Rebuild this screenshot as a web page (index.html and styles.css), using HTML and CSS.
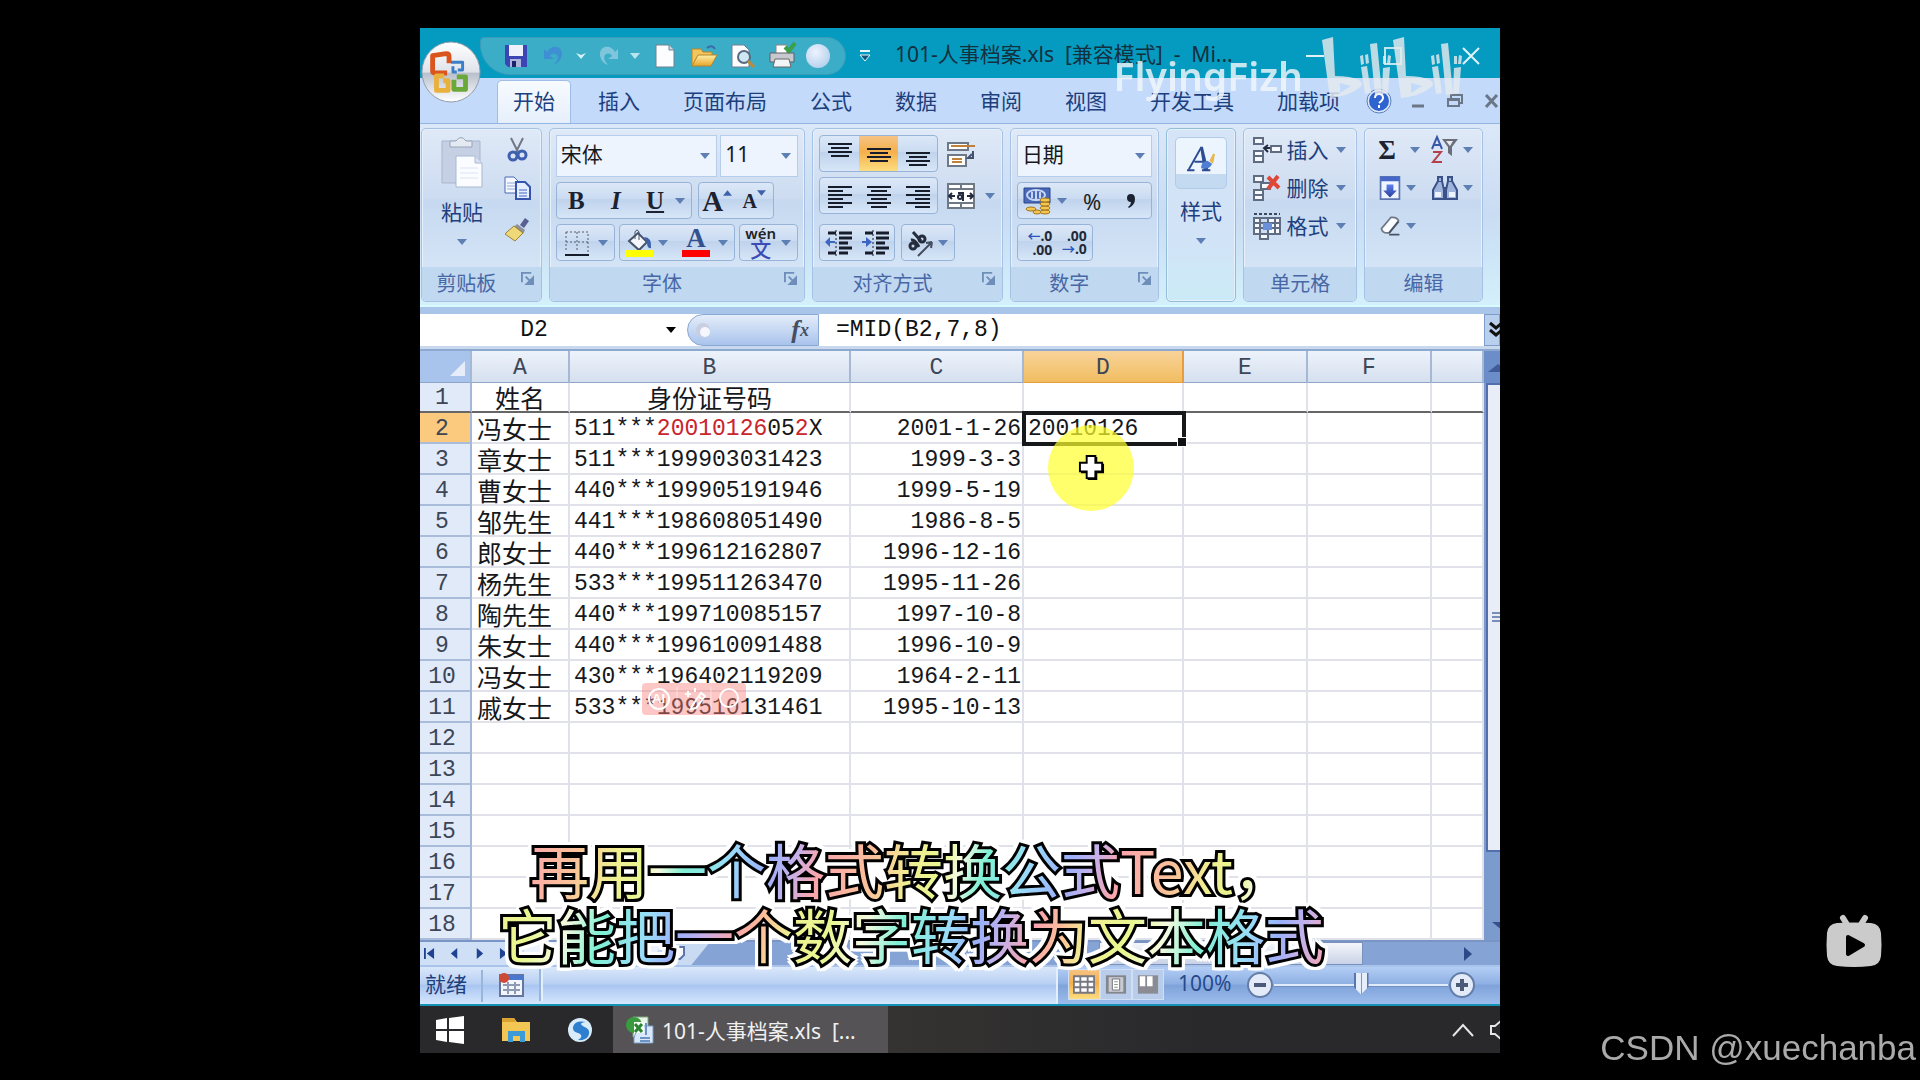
FILE: index.html
```html
<!DOCTYPE html>
<html lang="zh-CN">
<head>
<meta charset="utf-8">
<title>101-人事档案.xls [兼容模式]</title>
<link rel="stylesheet" href="styles.css">
</head>
<body>
<svg class="defs" aria-hidden="true">
  <defs>
    <linearGradient id="orb" x1="0" y1="0" x2="0" y2="1"><stop offset="0" stop-color="#fff"/><stop offset=".5" stop-color="#dfe3ea"/><stop offset=".52" stop-color="#b9c0cc"/><stop offset="1" stop-color="#fff"/></linearGradient>
    <radialGradient id="ball" cx=".4" cy=".35" r=".7"><stop offset="0" stop-color="#eef3ff"/><stop offset="1" stop-color="#b4d0ec"/></radialGradient>
    <linearGradient id="gold" x1="0" y1="0" x2="0" y2="1"><stop offset="0" stop-color="#fdf0a8"/><stop offset="1" stop-color="#e8a52a"/></linearGradient>
    <linearGradient id="blue" x1="0" y1="0" x2="0" y2="1"><stop offset="0" stop-color="#5d7ff0"/><stop offset="1" stop-color="#2a3f9a"/></linearGradient>
    <symbol id="down" viewBox="0 0 10 6"><path d="M0 0h10L5 6z" fill="#5d7fb4"/></symbol>
    <symbol id="launcher" viewBox="0 0 14 14"><path d="M1 11V1h10" fill="none" stroke="#6f8db9" stroke-width="2"/><path d="M13 6v7H6zM5 5l4 4" fill="#6f8db9" stroke="#6f8db9" stroke-width="2"/></symbol>
    <symbol id="top" viewBox="0 0 26 26"><path d="M1 3h24M4 7h18M1 11h24M4 15h18" stroke="#171c2a" stroke-width="2"/></symbol>
    <symbol id="lines-l" viewBox="0 0 26 26"><path d="M1 4h24M1 8h15M1 12h24M1 16h15M1 20h24M1 24h15" stroke="#171c2a" stroke-width="2"/></symbol>
    <symbol id="lines-c" viewBox="0 0 26 26"><path d="M1 4h24M5 8h16M1 12h24M5 16h16M1 20h24M5 24h16" stroke="#171c2a" stroke-width="2"/></symbol>
    <symbol id="lines-r" viewBox="0 0 26 26"><path d="M1 4h24M10 8h15M1 12h24M10 16h15M1 20h24M10 24h15" stroke="#171c2a" stroke-width="2"/></symbol>
  </defs>
</svg>

<main class="screen">
<section class="app">
  <header class="titlebar">
    <button class="orb" aria-label="Office">
      <svg viewBox="0 0 62 66"><ellipse cx="31" cy="33" rx="30" ry="31" fill="url(#orb)" stroke="#9099a8"/>
        <g fill="none" stroke-width="5" stroke-linejoin="round">
          <path d="M27 34H14q-2 0-2-2V16l14-2q3 0 3 3v7" stroke="#d9541e"/>
          <path d="M31 23h12v8h-5M33 27v6h4" stroke="#3b7fc8" stroke-width="3"/>
          <path d="M24 37h-8v15h12V42h-5" stroke="#e9b03c"/>
          <path d="M34 41v10h12V38h-9" stroke="#6ba83a"/>
        </g></svg>
    </button>
    <div class="qat">
      <button aria-label="保存"><svg class="i24" viewBox="0 0 24 24"><path d="M1 1h22v22H4l-3-3z" fill="#3b46b4"/><path d="M5 1h14v11H5z" fill="#eef1fb"/><path d="M6 15h11v8H6z" fill="#aab4dc"/><path d="M8 17h4v6H8z" fill="#1c2468"/></svg></button>
      <button aria-label="撤消"><svg class="i24" viewBox="0 0 24 24"><path d="M2 5v10h10l-4-3c3-5 10-2 7 5l-4 4c10-3 12-16 4-18-4-1-8 1-10 5z" fill="#3f8fd4"/></svg></button>
      <svg class="tiny" viewBox="0 0 10 6"><path d="M0 0l5 6 5-6-5 2z" fill="#d8f2fa"/></svg>
      <button aria-label="恢复"><svg class="i24" viewBox="0 0 24 24"><path d="M22 5v10H12l4-3c-3-5-10-2-7 5l3 4C3 18 1 5 9 3c4-1 8 1 10 5z" fill="#7fc5dc"/></svg></button>
      <svg class="tiny" viewBox="0 0 10 6"><path d="M0 0h10L5 6z" fill="#b8e4f0"/></svg>
      <button class="wide" aria-label="新建"><svg class="i24" viewBox="0 0 24 24"><path d="M3 1h13l5 5v17H3z" fill="#fcfdff" stroke="#70808f"/><path d="M16 1v5h5" fill="#cdd8e6" stroke="#70808f"/></svg></button>
      <button class="wide" aria-label="打开"><svg class="i28" viewBox="0 0 28 24"><path d="M2 22V5h9l2 3h9v4" fill="#f2c65a" stroke="#b5862c"/><path d="M2 22l6-11h19l-6 11z" fill="url(#gold)" stroke="#b5862c"/><path d="M17 4q5-4 8 1" fill="none" stroke="#3a6aa8" stroke-width="2"/></svg></button>
      <button class="wide" aria-label="打印预览"><svg class="i24" viewBox="0 0 24 24"><path d="M1 1h12l5 5v17H1z" fill="#fcfdff" stroke="#70808f"/><circle cx="13" cy="13" r="6" fill="#cfe6f5" stroke="#596b80" stroke-width="2"/><path d="M17 17l6 6" stroke="#c08a30" stroke-width="3"/></svg></button>
      <button class="wide" aria-label="打印"><svg class="i28" viewBox="0 0 28 26"><path d="M8 2h11v9H8z" fill="#fff" stroke="#888"/><path d="M2 10h24v9H2z" fill="#c8c9cf" stroke="#5d5f66"/><path d="M7 16h14l2 8H5z" fill="#f3f4f6" stroke="#666"/><path d="M17 4l4 4 6-8" fill="none" stroke="#3ba046" stroke-width="4"/></svg></button>
      <svg class="i24" viewBox="0 0 24 24"><circle cx="12" cy="12" r="12" fill="url(#ball)"/></svg>
    </div>
    <svg class="more" viewBox="0 0 10 12"><path d="M0 1h10" stroke="#e8f8fc" stroke-width="2"/><path d="M0 5h10l-5 6z" fill="#12557a" stroke="#e8f8fc"/></svg>
    <h1 class="doc-title">101-人事档案.xls&nbsp; [兼容模式]&nbsp; -&nbsp; Mi...</h1>
    <div class="win-buttons">
      <button aria-label="最小化"><svg viewBox="0 0 18 18"><path d="M0 9h18" stroke="#dff3f8" stroke-width="2"/></svg></button>
      <button aria-label="最大化"><svg viewBox="0 0 18 18"><path d="M1 1h16v16H1z" fill="none" stroke="#bfe5ef" stroke-width="2"/></svg></button>
      <button aria-label="关闭"><svg viewBox="0 0 18 18"><path d="M1 1l16 16M17 1L1 17" stroke="#dff3f8" stroke-width="2"/></svg></button>
    </div>
  </header>

  <nav class="tabs">
    <button class="tab active">开始</button><button class="tab">插入</button><button class="tab">页面布局</button><button class="tab">公式</button><button class="tab">数据</button><button class="tab">审阅</button><button class="tab">视图</button><button class="tab">开发工具</button><button class="tab">加载项</button>
    <div class="tab-tools">
      <button aria-label="帮助"><svg class="i24" viewBox="0 0 24 24"><circle cx="12" cy="12" r="11" fill="#2e63d0" stroke="#dce9fb" stroke-width="2"/><circle cx="12" cy="12" r="12" fill="none" stroke="#5d7fb8"/><path d="M8 9q0-4 4-4t4 4q0 2-4 5M12 16v3" fill="none" stroke="#fff" stroke-width="2"/></svg></button>
      <button aria-label="最小化窗口"><svg class="i16" viewBox="0 0 16 16"><path d="M2 13h12" stroke="#6b7686" stroke-width="3"/></svg></button>
      <button aria-label="还原窗口"><svg class="i16" viewBox="0 0 16 16"><path d="M4 5V2h11v8h-3" fill="none" stroke="#6b7686" stroke-width="2"/><path d="M1 6h11v7H1zM1 7h11" fill="none" stroke="#6b7686" stroke-width="2"/></svg></button>
      <button aria-label="关闭窗口"><svg class="i16" viewBox="0 0 16 16"><path d="M2 2l11 12M13 2L2 14" stroke="#6b7686" stroke-width="3"/></svg></button>
    </div>
  </nav>

  <div class="ribbon">
    <section class="group clip">
      <div class="group-body">
        <button class="big paste"><svg viewBox="0 0 44 52"><path d="M2 4h38v42H2z" fill="#c5d0e4" stroke="#a9b6cc"/><path d="M10 4h6q5-7 10 0h6v6H10z" fill="#e4e9f2" stroke="#98a4b8"/><path d="M16 19h19l7 7v24H16z" fill="#fbfcff" stroke="#a9b8d0"/><path d="M35 19v7h7" fill="#d8e2f2" stroke="#a9b8d0"/><path d="M20 31h18M20 36h18M20 41h18" stroke="#dbe4f3"/></svg><span>粘贴</span><svg class="tiny"><use href="#down"/></svg></button>
        <div class="clip-side">
          <button aria-label="剪切"><svg class="i24" viewBox="0 0 24 24"><path d="M6 1l7 14M18 1l-7 14" stroke="#6f7885" stroke-width="2"/><circle cx="8" cy="19" r="4" fill="none" stroke="#3d5fb0" stroke-width="3"/><circle cx="17" cy="18" r="4" fill="none" stroke="#3d5fb0" stroke-width="3"/></svg></button>
          <button aria-label="复制"><svg class="i28" viewBox="0 0 28 24"><path d="M2 1h9l4 4v12H2z" fill="#f5f9ff" stroke="#4b6ab5"/><path d="M4 7h8M4 10h8M4 13h8" stroke="#8fa8dc"/><path d="M13 6h9l5 5v12H13z" fill="#e4eeff" stroke="#3555ad" stroke-width="2"/><path d="M16 14h8M16 17h8M16 20h8" stroke="#4468c4"/></svg></button>
          <button aria-label="格式刷"><svg class="i28" viewBox="0 0 28 24"><path d="M17 8l5-7 4 3-5 7z" fill="#5a5f93"/><path d="M14 7l8 6-2 4-9-7z" fill="#8c8f9c"/><path d="M11 9l9 7-8 8L2 17l2-2z" fill="#efd878" stroke="#9c8230"/></svg></button>
        </div>
      </div>
      <h2>剪贴板<svg class="launch"><use href="#launcher"/></svg></h2>
    </section>

    <section class="group">
      <div class="group-body rows">
        <div class="row">
          <div class="combo grow"><select aria-label="字体"><option>宋体</option></select><svg class="tiny"><use href="#down"/></svg></div>
          <div class="combo size"><select aria-label="字号"><option>11</option></select><svg class="tiny"><use href="#down"/></svg></div>
        </div>
        <div class="row">
          <div class="set w136"><button class="serif b">B</button><button class="serif i">I</button><button class="serif u">U</button><svg class="tiny"><use href="#down"/></svg></div>
          <div class="set w76"><button class="serif big-a" aria-label="增大字号">A<svg class="mark" viewBox="0 0 10 6"><path d="M0 6h10L5 0z" fill="#3e62a8"/></svg></button><button class="serif small-a" aria-label="减小字号">A<svg class="mark" viewBox="0 0 10 6"><path d="M0 0h10L5 6z" fill="#3e62a8"/></svg></button></div>
        </div>
        <div class="row spread">
          <div class="set w59"><button aria-label="边框"><svg class="i26" viewBox="0 0 26 26"><path d="M2 2h22v20M2 2v20M13 2v20M2 12h22" fill="none" stroke="#525b6e" stroke-dasharray="2 2"/><path d="M1 25h24" stroke="#171c2a" stroke-width="2"/></svg></button><svg class="tiny"><use href="#down"/></svg></div>
          <div class="set w116"><button aria-label="填充颜色"><svg class="i28" viewBox="0 0 28 28"><path d="M4 12l9-8 9 9-8 8z" fill="#f3f6fb" stroke="#46536b" stroke-width="2"/><path d="M10 10V3q2-4 4 0v8" fill="none" stroke="#46536b"/><path d="M19 8q8 0 7 11-4 1-4-6z" fill="#3c62ae"/><path d="M0 21h28v7H0z" fill="#ff0"/></svg></button><svg class="tiny"><use href="#down"/></svg><button class="serif font-color">A</button><svg class="tiny"><use href="#down"/></svg></div>
          <div class="set w59"><button class="pinyin"><small>wén</small><b>文</b></button><svg class="tiny"><use href="#down"/></svg></div>
        </div>
      </div>
      <h2>字体<svg class="launch"><use href="#launcher"/></svg></h2>
    </section>

    <section class="group">
      <div class="group-body rows">
        <div class="row wide-gap">
          <div class="set w119"><button aria-label="顶端对齐"><svg class="i26"><use href="#top"/></svg></button><button class="on" aria-label="垂直居中"><svg class="i26" viewBox="0 -5 26 26"><use href="#top" width="26" height="26"/></svg></button><button aria-label="底端对齐"><svg class="i26" viewBox="0 -9 26 26"><use href="#top" width="26" height="26"/></svg></button></div>
          <button class="plain" aria-label="自动换行"><svg class="i28" viewBox="0 0 28 28"><path d="M1 3h20v7H1zM1 15h18v11H1z" fill="#fff" stroke="#6f7885" stroke-width="2"/><path d="M4 6h24M5 19h10M5 22h10" stroke="#c0803a" stroke-width="2"/><path d="M26 11v7h-5l4-4" fill="none" stroke="#42526e" stroke-width="2"/></svg></button>
        </div>
        <div class="row wide-gap">
          <div class="set w119"><button aria-label="左对齐"><svg class="i26"><use href="#lines-l"/></svg></button><button aria-label="居中"><svg class="i26"><use href="#lines-c"/></svg></button><button aria-label="右对齐"><svg class="i26"><use href="#lines-r"/></svg></button></div>
          <button class="plain" aria-label="合并后居中"><svg class="i28" viewBox="0 0 28 28"><path d="M1 2h26v24H1zM1 7h26M1 21h26M14 2v5M14 21v5" fill="#fff" stroke="#6f7885" stroke-width="2"/><path d="M2 14h6M20 14h6M5 11l-3 3 3 3M23 11l3 3-3 3" stroke="#222b3d" fill="none" stroke-width="2"/><circle cx="13" cy="15" r="2" fill="none" stroke="#222b3d" stroke-width="2"/><path d="M11 11h5v8" stroke="#222b3d" fill="none" stroke-width="2"/></svg><svg class="tiny"><use href="#down"/></svg></button>
        </div>
        <div class="row">
          <div class="set w76"><button aria-label="减少缩进量"><svg class="i28" viewBox="0 0 28 28"><path d="M3 4h8M14 4h13M14 9h13M14 14h9M14 19h13M3 24h8M14 24h9" stroke="#171c2a" stroke-width="3"/><path d="M11 1v26" stroke="#171c2a" stroke-dasharray="2 2"/><path d="M10 12H5V8l-5 5 5 5v-4h5z" fill="#3c66c4"/></svg></button><button aria-label="增加缩进量"><svg class="i28" viewBox="0 0 28 28"><path d="M3 4h8M14 4h13M14 9h13M14 14h9M14 19h13M3 24h8M14 24h9" stroke="#171c2a" stroke-width="3"/><path d="M11 1v26" stroke="#171c2a" stroke-dasharray="2 2"/><path d="M0 12h4V8l6 5-6 5v-4H0z" fill="#3c66c4"/></svg></button></div>
          <div class="set w54"><button aria-label="方向"><svg class="i28" viewBox="0 0 28 28"><path d="M12 27L26 13M26 13l-6 1M26 13l-1 6" stroke="#444d5f" stroke-width="2"/><g fill="none" stroke="#252c3b" stroke-width="3"><circle cx="7" cy="17" r="3"/><path d="M5 11q4-1 8 7"/><circle cx="16" cy="10" r="3"/><path d="M7 3l8 9"/></g></svg></button><svg class="tiny"><use href="#down"/></svg></div>
        </div>
      </div>
      <h2>对齐方式<svg class="launch"><use href="#launcher"/></svg></h2>
    </section>

    <section class="group">
      <div class="group-body rows">
        <div class="row"><div class="combo grow"><select aria-label="数字格式"><option>日期</option></select><svg class="tiny"><use href="#down"/></svg></div></div>
        <div class="row"><div class="set grow"><button aria-label="会计数字格式"><svg class="i28" viewBox="0 0 28 28"><path d="M1 1h26v15H1z" fill="#4969b8" stroke="#2c478b"/><ellipse cx="13" cy="8" rx="9" ry="5" fill="none" stroke="#c7d6f4" stroke-width="2"/><path d="M9 5v6M17 5v6M13 4v8" stroke="#c7d6f4" stroke-width="2"/><g fill="#f3c552" stroke="#a3761b"><ellipse cx="22" cy="25" rx="5" ry="2"/><ellipse cx="22" cy="21" rx="5" ry="2"/><ellipse cx="22" cy="17" rx="5" ry="2"/><ellipse cx="22" cy="13" rx="5" ry="2"/><ellipse cx="8" cy="22" rx="5" ry="2"/><ellipse cx="14" cy="25" rx="4" ry="2"/></g></svg></button><svg class="tiny"><use href="#down"/></svg><button class="pct">%</button><button class="serif comma" aria-label="千位分隔样式"><svg viewBox="0 0 8 14"><path d="M4 0q4 0 4 5 0 6-6 9l-1-1q3-2 3-5-4 0-4-4 0-4 4-4z" fill="#1c2230"/></svg></button></div></div>
        <div class="row"><div class="set w76"><button class="dec" aria-label="增加小数位数"><span><i>←</i>.0</span><span>.00</span></button><button class="dec" aria-label="减少小数位数"><span>.00</span><span><i>→</i>.0</span></button></div></div>
      </div>
      <h2>数字<svg class="launch"><use href="#launcher"/></svg></h2>
    </section>

    <section class="group styles">
      <button class="big style-btn"><span class="style-tile"><svg viewBox="0 0 30 30"><path d="M2 26L15 3M8 18h9M0 27h8M16 27h9" fill="none" stroke="#2d4c92" stroke-width="2"/><path d="M14 2h3l6 25h-5z" fill="#2d4c92"/><path d="M15 25q0-7 7-8l5 3q-3 7-12 5z" fill="#4f7ed2"/><path d="M24 17l4-8 2 1-2 10z" fill="#e8b84a"/></svg></span><span>样式</span><svg class="tiny"><use href="#down"/></svg></button>
    </section>

    <section class="group">
      <div class="group-body list">
        <button><svg class="i28" viewBox="0 0 28 28"><path d="M1 2h9v6H1zM1 15h9v11H1zM1 20h9M18 10h10v6H18z" fill="#f6f9ff" stroke="#5f6c82" stroke-width="2"/><path d="M17 12h-5M15 9l-4 3 4 4" stroke="#222b3d" fill="none" stroke-width="2"/></svg><span>插入</span><svg class="tiny"><use href="#down"/></svg></button>
        <button><svg class="i28" viewBox="0 0 28 28"><path d="M1 2h9v6H1zM8 9h9v6H8zM1 16h9v10H1zM1 21h9" fill="#f6f9ff" stroke="#5f6c82" stroke-width="2"/><path d="M15 3l11 11M25 2L15 15" stroke="#df4738" stroke-width="4"/></svg><span>删除</span><svg class="tiny"><use href="#down"/></svg></button>
        <button><svg class="i28" viewBox="0 0 28 28"><path d="M1 6h26v16H1zM1 11h26M1 16h26M7 6v21h8V6M22 6v16" fill="#f6f9ff" stroke="#5f6c82" stroke-width="2"/><path d="M10 11h9v7h-9z" fill="#6a90dc"/><path d="M1 2h26" stroke="#3c475c" stroke-width="2" stroke-dasharray="3 2"/></svg><span>格式</span><svg class="tiny"><use href="#down"/></svg></button>
      </div>
      <h2>单元格</h2>
    </section>

    <section class="group">
      <div class="group-body list edit">
        <div><button class="serif sigma">Σ<svg class="tiny"><use href="#down"/></svg></button><button aria-label="排序和筛选"><svg class="i28" viewBox="0 0 28 28"><path d="M1 13L6 1l5 12M3 9h6" fill="none" stroke="#3958a8" stroke-width="2"/><path d="M2 16h8L2 26h9" fill="none" stroke="#b4404a" stroke-width="2"/><path d="M11 3h16l-6 8v9l-4-3v-6z" fill="#6a6f7a"/><path d="M15 5h7l-3 5z" fill="#e8ebf0"/></svg><svg class="tiny"><use href="#down"/></svg></button></div>
        <div><button aria-label="填充"><svg class="i24" viewBox="0 0 24 28"><path d="M1 1h22v26H1z" fill="#eff5ff" stroke="#5b74b0" stroke-width="2"/><path d="M1 1h22v5H1z" fill="#4467c8"/><path d="M8 10h8v7h4l-8 8-8-8h4z" fill="url(#blue)"/></svg><svg class="tiny"><use href="#down"/></svg></button><button aria-label="查找和选择"><svg class="i28" viewBox="0 0 28 28"><g fill="#9fb4dc" stroke="#3a5288" stroke-width="2"><path d="M2 25V16L7 7h4l2 9v9zM26 25v-9l-5-9h-4l-2 9v9z"/><path d="M7 7V3h4v4M17 7V3h4v4M12 14h4"/></g><path d="M4 18h6v5H4zM18 18h6v5h-6z" fill="#eef4ff"/></svg><svg class="tiny"><use href="#down"/></svg></button></div>
        <div><button aria-label="清除"><svg class="i24" viewBox="0 0 24 28"><path d="M2 17L13 4q7-1 9 4L11 22q-8 1-9-5z" fill="#fbfcff" stroke="#6f7885" stroke-width="2"/><path d="M11 24h12M11 22l11-13" stroke="#4a5262" stroke-width="2"/></svg><svg class="tiny"><use href="#down"/></svg></button></div>
      </div>
      <h2>编辑</h2>
    </section>
  </div>

  <div class="formula-bar">
    <label class="name-box"><input value="D2" aria-label="名称框"><svg class="tiny" viewBox="0 0 10 6"><path d="M0 0h10L5 6z" fill="#000"/></svg></label>
    <div class="fx"><svg class="i16" viewBox="0 0 16 16"><circle cx="8" cy="8" r="7" fill="#c9cfe0"/><circle cx="10" cy="10" r="5" fill="#f5f7fc"/></svg><button>f<sub>x</sub></button></div>
    <input class="formula" value="=MID(B2,7,8)" aria-label="编辑栏">
    <button class="expand" aria-label="展开编辑栏"><svg viewBox="0 0 16 16"><path d="M2 1l6 5 6-5M2 8l6 5 6-5" fill="none" stroke="#111" stroke-width="3"/></svg></button>
  </div>

  <div class="sheet">
    <table>
      <colgroup><col class="c-head"><col class="c-a"><col class="c-b"><col class="c-c"><col class="c-d"><col class="c-e"><col class="c-e"><col></colgroup>
      <thead><tr><th class="corner"><svg viewBox="0 0 16 16"><path d="M16 0v16H0z" fill="#e6ecf8"/></svg></th><th>A</th><th>B</th><th>C</th><th class="sel">D</th><th>E</th><th>F</th><th></th></tr></thead>
      <tbody>
        <tr class="frozen"><th>1</th><td class="cjk mid">姓名</td><td class="cjk mid">身份证号码</td><td></td><td></td><td></td><td></td><td></td></tr>
        <tr><th class="sel">2</th><td class="cjk">冯女士</td><td>511***<em>20010126</em>05<em>2</em>X</td><td class="num">2001-1-26</td><td class="active-cell">20010126<span class="handle"></span></td><td></td><td></td><td></td></tr>
        <tr><th>3</th><td class="cjk">章女士</td><td>511***199903031423</td><td class="num">1999-3-3</td><td class="pointer-cell"><span class="halo"></span><svg class="cursor" viewBox="0 0 28 28"><path d="M10 3h10v7h7v10h-7v7H10v-7H3V10h7z" fill="#000"/><path d="M9 2h9v7h7v9h-7v7H9v-7H2V9h7z" fill="#fff" stroke="#000" stroke-width="2"/></svg></td><td></td><td></td><td></td></tr>
        <tr><th>4</th><td class="cjk">曹女士</td><td>440***199905191946</td><td class="num">1999-5-19</td><td></td><td></td><td></td><td></td></tr>
        <tr><th>5</th><td class="cjk">邹先生</td><td>441***198608051490</td><td class="num">1986-8-5</td><td></td><td></td><td></td><td></td></tr>
        <tr><th>6</th><td class="cjk">郎女士</td><td>440***199612162807</td><td class="num">1996-12-16</td><td></td><td></td><td></td><td></td></tr>
        <tr><th>7</th><td class="cjk">杨先生</td><td>533***199511263470</td><td class="num">1995-11-26</td><td></td><td></td><td></td><td></td></tr>
        <tr><th>8</th><td class="cjk">陶先生</td><td>440***199710085157</td><td class="num">1997-10-8</td><td></td><td></td><td></td><td></td></tr>
        <tr><th>9</th><td class="cjk">朱女士</td><td>440***199610091488</td><td class="num">1996-10-9</td><td></td><td></td><td></td><td></td></tr>
        <tr><th>10</th><td class="cjk">冯女士</td><td>430***196402119209</td><td class="num">1964-2-11</td><td></td><td></td><td></td><td></td></tr>
        <tr><th>11</th><td class="cjk">戚女士</td><td class="badge-cell">533***199510131461<span class="ai-badge"><svg viewBox="0 0 104 32"><g fill="none" stroke="#fff" stroke-width="2"><circle cx="17" cy="16" r="10"/><circle cx="87" cy="15" r="9"/><path d="M50 23l9-13 4 3-9 12-5 1zM56 13l4 3M46 8v6M43 11h6M53 5v4"/></g><path d="M35 4v24M69 4v24" stroke="#fff" stroke-opacity=".5"/></svg><small>AI</small></span></td><td class="num">1995-10-13</td><td></td><td></td><td></td><td></td></tr>
        <tr><th>12</th><td></td><td></td><td></td><td></td><td></td><td></td><td></td></tr>
        <tr><th>13</th><td></td><td></td><td></td><td></td><td></td><td></td><td></td></tr>
        <tr><th>14</th><td></td><td></td><td></td><td></td><td></td><td></td><td></td></tr>
        <tr><th>15</th><td></td><td></td><td></td><td></td><td></td><td></td><td></td></tr>
        <tr><th>16</th><td></td><td></td><td></td><td></td><td></td><td></td><td></td></tr>
        <tr><th>17</th><td></td><td></td><td></td><td></td><td></td><td></td><td></td></tr>
        <tr><th>18</th><td></td><td></td><td></td><td></td><td></td><td></td><td></td></tr>
      </tbody>
    </table>
    <div class="vscroll"><div class="v-up"><svg viewBox="0 0 16 8"><path d="M4 8l10-8 10 8z" fill="#3f5c96"/></svg></div><div class="v-thumb"><i></i></div><div class="v-track"><svg viewBox="0 0 16 8"><path d="M4 0h20L14 8z" fill="#35508c"/></svg></div></div>
  </div>

  <div class="sheet-tabs">
    <div class="nav-arrows">
      <button aria-label="第一张"><svg viewBox="0 0 12 14"><path d="M1 1v12" stroke="#1f4390" stroke-width="2"/><path d="M11 1v12L3 7z" fill="#1f4390"/></svg></button>
      <button aria-label="上一张"><svg viewBox="0 0 12 14"><path d="M9 1v12L2 7z" fill="#1f4390"/></svg></button>
      <button aria-label="下一张"><svg viewBox="0 0 12 14"><path d="M3 1v12l7-6z" fill="#1f4390"/></svg></button>
      <button aria-label="最后一张"><svg viewBox="0 0 12 14"><path d="M1 1v12l8-6z" fill="#1f4390"/><path d="M11 1v12" stroke="#1f4390" stroke-width="2"/></svg></button>
    </div>
    <div class="tab-shape"></div>
    <div class="new-sheet"><svg viewBox="0 0 16 16"><path d="M2 2h12v8l-4 4H2z" fill="#f6f8fd" stroke="#5f74a8" stroke-width="2"/></svg></div>
    <div class="hscroll"><div class="h-thumb"></div><svg viewBox="0 0 10 14"><path d="M1 0v14l8-7z" fill="#2d4a88"/></svg></div>
  </div>

  <footer class="status">
    <span class="ready">就绪</span>
    <span class="macro"><svg viewBox="0 0 26 24"><path d="M2 2h23v21H2z" fill="#f2f5fb" stroke="#66759a" stroke-width="2"/><path d="M3 2h22v5H3z" fill="#4a78cf"/><path d="M5 12h17M5 17h17M10 9v12M17 9v12" stroke="#8f9bb5" stroke-width="2"/><circle cx="6" cy="5" r="5" fill="#cf4a34"/></svg></span>
    <div class="views">
      <button class="on" aria-label="普通"><svg viewBox="0 0 24 20"><path d="M1 1h22v18H1zM1 7h22M1 13h22M8 1v18M16 1v18" fill="#fff" stroke="#77777f" stroke-width="2"/></svg></button>
      <button aria-label="页面布局视图"><svg viewBox="0 0 24 20"><path d="M1 0h22v20H1z" fill="#85858d"/><path d="M4 2h16v16H4z" fill="#c9cbd2"/><path d="M8 4h8v12H8z" fill="#fff" stroke="#6b6b73"/><path d="M10 7h4M10 10h4M10 13h4" stroke="#888"/></svg></button>
      <button aria-label="分页预览"><svg viewBox="0 0 24 20"><path d="M1 0h22v20H1z" fill="#8b8b93"/><path d="M3 1h6v11H3zM11 1h6v11h-6z" fill="#fff"/></svg></button>
    </div>
    <span class="zoom-value">100%</span>
    <button class="round" aria-label="缩小"><svg viewBox="0 0 26 26"><circle cx="13" cy="13" r="12" fill="#e3ebf8" stroke="#647da8" stroke-width="2"/><path d="M7 13h12" stroke="#4a5a78" stroke-width="4"/></svg></button>
    <input class="zoom" type="range" min="0" max="100" value="50" aria-label="显示比例">
    <button class="round" aria-label="放大"><svg viewBox="0 0 26 26"><circle cx="13" cy="13" r="12" fill="#e3ebf8" stroke="#647da8" stroke-width="2"/><path d="M7 13h12M13 7v12" stroke="#4a5a78" stroke-width="4"/></svg></button>
    <span class="grip"></span>
  </footer>

  <div class="taskbar">
    <button class="icon-btn" aria-label="开始菜单"><svg class="i28" viewBox="0 0 28 28"><path d="M0 4l11-2v11H0zM13 2l15-2v13H13zM0 15h11v11L0 24zM13 15h15v13l-15-2z" fill="#fff"/></svg></button>
    <button class="icon-btn" aria-label="文件资源管理器"><svg class="i28" viewBox="0 0 28 26"><path d="M0 1h12l3 4h13v19H0z" fill="#f4c654"/><path d="M0 1h12l2 4H0z" fill="#d9a431"/><path d="M6 25V14h17v11h-5v-6h-7v6z" fill="#3a9bd6"/></svg></button>
    <button class="icon-btn" aria-label="浏览器"><svg class="i24" viewBox="0 0 24 24"><circle cx="12" cy="12" r="12" fill="#d9ecfa"/><path d="M18 4Q7 2 5 9c-1 6 6 5 8 8 1 2-1 4-3 5 8 1 12-4 11-9-1-4-7-4-8-7 0-1 2-2 5-2z" fill="#2f7fd0"/></svg></button>
    <button class="task"><svg class="i28" viewBox="0 0 28 28"><path d="M7 1h15v20H7z" fill="#e9f4e8" stroke="#79a67a"/><path d="M12 10h15v17H8V22z" fill="#d9e8fa" stroke="#7a9cc8"/><path d="M14 22h10M14 25h10M20 7v12" stroke="#6d93c4" stroke-width="2"/><circle cx="8" cy="9" r="8" fill="#3a9a3f"/><path d="M8 6h10v11H8z" fill="#f7fff5"/><path d="M9 8l7 8M16 8l-7 8" stroke="#2b8431" stroke-width="3"/></svg><span>101-人事档案.xls&nbsp; [...</span></button>
    <div class="tray"><button aria-label="显示隐藏的图标"><svg viewBox="0 0 22 14"><path d="M1 13L11 2l10 11" fill="none" stroke="#e6e6e6" stroke-width="2"/></svg></button><button aria-label="音量"><svg viewBox="0 0 22 22"><path d="M2 7h4l7-6v20l-7-6H2z" fill="none" stroke="#e6e6e6" stroke-width="2"/></svg></button></div>
  </div>

  <div class="watermark"><span>FlyingFizh</span>
    <svg viewBox="0 0 142 64"><g fill="#e6eaee"><g id="mark-half"><path d="M0 4L11 1l2 39q16 0 24 4 6 4 0 8-10 8-29 10zM18 47v10l11-7z" fill-rule="evenodd"/><path d="M39 31l6-1 4 27-6 1zM48 8l7-1 5 51-7 1zM61 32l7-1-2 26-6 1z"/><path d="M38 20l3-1 1 9-3 1zM43 19l3-1 1 9-3 1zM61 20h3v8h-3zM66 19l3 1-1 8h-3z"/></g><use href="#mark-half" x="71"/></g></svg>
  </div>
  <div class="caption"><p data-text="再用一个格式转换公式Text，"><span>再用一个格式转换公式Text，</span></p><p class="second" data-text="它能把一个数字转换为文本格式"><span>它能把一个数字转换为文本格式</span></p></div>
</section>
</main>

<svg class="tv" viewBox="0 0 54 52"><path d="M16 3l5 8M38 3l-5 8" stroke="#cbcbcb" stroke-width="6" stroke-linecap="round"/><path d="M10 8Q27 7 44 8q9 1 10 10 1 12 0 23-1 9-10 10-17 2-34 0-9-1-10-10-1-11 0-23Q1 9 10 8z" fill="#cbcbcb"/><path d="M21 22l15 8-15 9z" fill="#000" stroke="#000" stroke-width="4" stroke-linejoin="round"/></svg>
<div class="credit">CSDN @xuechanba</div>
</body>
</html>
```
FILE: styles.css
```css
* { box-sizing: border-box; }
body { margin: 0; min-height: 100vh; background: #000; overflow: hidden; font-family: "Noto Sans", "Noto Sans CJK SC", sans-serif; color: #1d3f7d; }
button { display: flex; align-items: center; justify-content: center; margin: 0; padding: 0; border: 0; background: none; font: inherit; color: inherit; }
svg { display: block; flex: none; overflow: visible; }
h1, h2, p { margin: 0; font-weight: 400; }
.defs { position: absolute; width: 0; height: 0; }
.screen { padding-top: 28px; }
.app { position: relative; width: 56.25%; margin: 0 auto; overflow: hidden; background: #cfe0f7; isolation: isolate; }
.tiny { width: 10px; height: 6px; }
.i16 { width: 16px; height: 16px; }
.i24 { width: 24px; height: 24px; }
.i26 { width: 26px; height: 26px; }
.i28 { width: 28px; height: 28px; }

.titlebar { position: relative; display: flex; align-items: center; height: 50px; padding: 6px 20px 0 60px; background: #059bc1; }
.orb { position: absolute; left: 1px; top: 12px; width: 60px; height: 64px; z-index: 2; }
.orb svg { width: 60px; height: 64px; }
.qat { display: flex; align-items: center; gap: 10px; height: 38px; width: 366px; padding: 0 18px 0 23px; border: 1px solid #3a9cb8; border-radius: 4px 19px 19px 30px; background: #3cadc6; }
.qat .wide { margin-left: 3px; }
.qat .i28 { height: 26px; }
.qat button:nth-of-type(1) { margin-right: 4px; }
.more { width: 10px; height: 12px; margin: 0 25px 0 14px; }
.doc-title { flex: 1; width: 0; padding-bottom: 4px; font-size: 21px; line-height: 30px; color: #12303d; white-space: nowrap; }
.win-buttons { display: flex; gap: 60px; }
.win-buttons svg { width: 18px; height: 18px; }

.tabs { display: flex; align-items: flex-end; gap: 11px; height: 46px; padding-left: 77px; background: #c3dafb; border-bottom: 1px solid #93b5e3; }
.tab { flex: none; height: 43px; padding: 0 16px 2px; font-size: 21px; line-height: 30px; border-radius: 5px 5px 0 0; }
.tab.active { background: linear-gradient(#f7fbff, #e6effb); border: 1px solid #9fbde6; border-bottom: 0; padding: 0 15px 2px; }
.tab-tools { display: flex; align-items: center; gap: 21px; height: 44px; }
.tab-tools .i24 { margin-right: -2px; }

.ribbon { display: grid; grid-template-columns: 121fr 257fr 191fr 149fr 71fr 114fr 119fr; gap: 7px; padding: 4px 17px 3px 1px; background: linear-gradient(#dbe8f8, #c9dcf3 50%, #d3f0fb); border-bottom: 2px solid #d9fbff; }
.group { min-width: 0; display: flex; flex-direction: column; height: 174px; border: 1px solid #a5c2e4; border-radius: 5px; background: linear-gradient(#dfe9f7, #cddcf1 40%, #c6d9f0 42%, #dceafa); box-shadow: inset 0 0 0 1px #e6f1fc; overflow: hidden; }
.group-body { flex: 1; }
.group h2 { position: relative; height: 34px; background: #c1d8f1; text-align: center; font-size: 20px; line-height: 34px; color: #4767a5; padding-right: 30px; }
.group:nth-of-type(n+6) h2 { padding-right: 0; }
.launch { position: absolute; right: 7px; top: 5px; width: 13px; height: 13px; }
.group.styles { background: linear-gradient(#d5e4f6, #d2e3f7 60%, #cbeaf6); border-color: #92bcd8; }

.clip .group-body { display: flex; justify-content: space-between; padding: 8px 10px 0 18px; }
.big { flex-direction: column; justify-content: flex-start; font-size: 21px; line-height: 30px; }
.paste svg:first-child { width: 44px; height: 52px; }
.paste span { margin: 8px 0 12px; }
.clip-side { display: flex; flex-direction: column; align-items: center; gap: 13px; }
.rows { display: flex; flex-direction: column; gap: 5px; padding: 6px 6px 0; }
.row { display: flex; gap: 6px; align-items: center; height: 37px; }
.row:first-child { height: 42px; gap: 3px; }
.row.spread { justify-content: space-between; gap: 0; }
.row.wide-gap { gap: 9px; }
.row.wide-gap:nth-child(1) { height: 37px; gap: 9px; }
.row.wide-gap:nth-child(2) { margin-bottom: 5px; }
.combo { position: relative; display: flex; align-items: center; height: 42px; background: #edf4fd; border: 1px solid #b5cdea; }
.combo select { appearance: none; width: 100%; height: 36px; margin-bottom: 4px; padding: 0 4px; border: 0; background: none; font-family: "Noto Sans", "Noto Sans CJK SC", sans-serif; font-size: 21px; color: #16181d; }
.combo .tiny { position: absolute; right: 6px; }
.grow { flex: 1; }
.size { width: 78px; }
.set { display: flex; align-items: center; justify-content: space-around; height: 37px; border: 1px solid #98b3d8; border-radius: 4px; background: linear-gradient(#dce8f8, #cadbf1 45%, #bfd3ec 47%, #d7e6f8); }
.set button { height: 35px; flex: 1; }
.set .tiny { margin-right: 6px; }
.w136 { width: 136px; } .w76 { width: 76px; } .w59 { width: 59px; } .w116 { width: 116px; } .w119 { width: 119px; } .w54 { width: 54px; }
.on { background: linear-gradient(#f6c383, #f5b04c 45%, #fcdd80); }
.serif { font-family: "Liberation Serif", serif; font-weight: 700; font-size: 25px; line-height: 30px; color: #1c2230; }
.i { font-style: italic; }
.u { text-decoration: underline; }
.big-a { font-size: 29px; }
.small-a { font-size: 20px; }
.set .mark { width: 9px; height: 6px; margin-bottom: 16px; }
.font-color { font-size: 27px; line-height: 22px; color: #34518f; }
.set .font-color { flex: none; width: 28px; height: 28px; padding-bottom: 2px; border-bottom: 7px solid #f00; margin: 0 8px; }
.pinyin { flex-direction: column; font-size: 14px; }
.pinyin small { font-size: 15px; line-height: 13px; color: #222; font-weight: 600; }
.pinyin b { font-size: 21px; line-height: 19px; color: #3b4db5; font-weight: 500; }
.plain { gap: 10px; }
.pct { font-size: 22px; color: #222; }
.comma svg { width: 8px; height: 14px; }
.dec { flex-direction: column; align-items: flex-end; font-size: 14px; line-height: 13px; font-weight: 700; color: #222a38; }
.dec i { font-style: normal; font-size: 13px; color: #2a55b8; }
.dec + .dec { padding-right: 5px; }
.style-btn { padding-top: 8px; }
.style-tile { display: flex; justify-content: center; width: 52px; height: 52px; margin-bottom: 7px; padding-top: 7px; border: 1px solid #b0cbe8; border-radius: 5px; background: linear-gradient(#ecf4fd 72%, #c4daf0 73%); }
.style-tile svg { width: 28px; height: 28px; }
.style-btn > .tiny { margin-top: 12px; }
.list { display: flex; flex-direction: column; gap: 8px; padding: 6px 5px 0 9px; }
.list button { gap: 5px; height: 30px; font-size: 21px; line-height: 30px; justify-content: flex-start; white-space: nowrap; }
.list button .tiny { margin-left: 3px; }
.group-body.edit { padding-left: 13px; }
.edit > div { display: grid; grid-template-columns: 53px 1fr; }
.list.edit .tiny { margin-left: -1px; }
.list .sigma { font-size: 27px; gap: 15px; }

.formula-bar { display: flex; height: 42px; border-top: 7px solid #a9c5ea; border-bottom: 3px solid #c8d9ef; background: #fff; }
.name-box { display: flex; align-items: center; width: 256px; }
input { min-width: 0; border: 0; padding: 0; outline: 0; background: none; font-family: "Liberation Mono", monospace; font-size: 23px; color: #111; }
.name-box input { flex: 1; width: 100%; padding-right: 18px; text-align: center; }
.fx { display: flex; align-items: center; justify-content: space-between; width: 132px; margin-left: 11px; padding: 0 9px 0 7px; border: 1px solid #8aa8d4; border-radius: 16px 0 0 16px; background: linear-gradient(#e4edfa, #a9c3ec); }
.fx button { font: italic 700 26px/28px "Liberation Serif", serif; color: #454f63; }
.fx sub { font-size: 18px; line-height: 18px; }
.formula { flex: 1; padding-left: 17px; }
.expand { width: 16px; border: 1px solid #7d9cca; background: #b9cfee; overflow: visible; }
.expand svg { width: 16px; height: 16px; margin-left: 8px; }

.sheet { display: flex; background: #fff; border-top: 2px solid #8da9cf; }
table { flex: 1; width: 0; table-layout: fixed; border-collapse: separate; border-spacing: 0; font-family: "Liberation Mono", "Noto Sans CJK SC", monospace; font-size: 23px; color: #16181c; }
.c-head { width: 52px; } .c-a { width: 98px; } .c-b { width: 281px; } .c-c { width: 173px; } .c-d { width: 160px; } .c-e { width: 124px; }
th { padding: 3px 0 0; font-weight: 400; color: #3c4656; line-height: 26px; }
thead th { height: 32px; background: linear-gradient(#edf3fb, #d5dfee); border-right: 2px solid #a5b9d6; border-bottom: 1px solid #8fa6c8; }
thead .sel { background: linear-gradient(#f8d39a, #f1bd5f); border-color: #e99b3f; }
.corner svg { width: 15px; height: 15px; margin: 0 5px 0 auto; }
thead .corner { background: #a9c4ec; }
tbody th { height: 31px; background: #e1eaf9; border-right: 2px solid #a3b7d8; border-bottom: 2px solid #a9bddb; padding-right: 6px; }
tbody .sel { background: #fbca7f; }
td { height: 31px; padding: 3px 3px 0 4px; line-height: 26px; border-right: 2px solid #e0e1e9; border-bottom: 2px solid #e0e1e9; white-space: nowrap; }
.frozen th, .frozen td { height: 30px; line-height: 25px; border-bottom: 2px solid #666; }
td.cjk { font-family: "Noto Sans CJK SC", sans-serif; font-size: 25px; padding: 1px 0 0 5px; line-height: 28px; }
.frozen td.mid { text-align: center; padding: 0; line-height: 26px; }
.num { text-align: right; padding-right: 1px; padding-left: 0; }
em { font-style: normal; color: #c9252d; }
.active-cell { position: relative; outline: 4px solid #16181a; outline-offset: -2px; }
.handle { position: absolute; right: -5px; bottom: -5px; width: 10px; height: 10px; background: #111; border: 1px solid #fff; z-index: 2; }
.pointer-cell, .badge-cell { position: relative; }
.halo { position: absolute; z-index: 1; left: 24px; top: -19px; width: 86px; height: 86px; border-radius: 50%; background: rgba(255, 255, 45, .7); }
.cursor { position: absolute; z-index: 3; left: 54px; top: 10px; width: 27px; height: 27px; }
.ai-badge { position: absolute; left: 72px; top: -9px; width: 104px; height: 32px; border-radius: 4px; background: rgba(248, 130, 125, .45); color: #fff; }
.ai-badge small { position: absolute; left: 10px; top: 8px; font: 700 13px/16px "Liberation Sans", sans-serif; }
.vscroll { display: flex; flex-direction: column; width: 16px; background: #7b9acd; }
.v-up { height: 32px; background: #6b8ec8; padding-top: 13px; }
.v-up svg, .v-track svg { width: 16px; height: 8px; }
.v-thumb { flex: 1; margin-left: 2px; border: 2px solid #526fab; border-right: 0; background: #e8edf7; display: flex; align-items: center; }
.v-thumb i { width: 10px; height: 12px; margin-left: 4px; background: repeating-linear-gradient(#7890b8 0 2px, #e8edf7 2px 4px); }
.v-track { height: 88px; padding: 70px 0 0 4px; }

.sheet-tabs { display: flex; align-items: center; height: 27px; background: #85a3d4; border-top: 2px solid #7895c5; border-bottom: 2px solid #a9c3ea; }
.nav-arrows { display: flex; align-items: center; gap: 14px; width: 104px; height: 23px; padding-left: 4px; background: #cfe0f6; }
.nav-arrows svg { width: 11px; height: 13px; }
.tab-shape { width: 144px; height: 23px; background: #edf3fc; clip-path: polygon(0 0, 100% 0, 86% 100%, 0 100%); }
.new-sheet { width: 62px; height: 23px; margin-left: -20px; padding: 3px 22px; background: #c9daf3; clip-path: polygon(25% 0, 100% 0, 70% 100%, 0 100%); }
.new-sheet svg { width: 16px; height: 16px; }
.hscroll { flex: 1; display: flex; align-items: center; justify-content: flex-end; padding-right: 27px; }
.hscroll svg { width: 10px; height: 14px; }
.h-thumb { width: 264px; height: 23px; margin-right: 100px; border: 1px solid #7891bd; background: linear-gradient(#f4f6fb, #c9d2e6); }

.status { display: flex; align-items: center; height: 39px; border-bottom: 2px solid #1592b5; background: linear-gradient(#d9e7fa, #b9d0f3 45%, #a9c6f1 50%, #d6e7fd); font-size: 21px; }
.ready { width: 63px; padding: 0 0 4px 5px; line-height: 28px; border-right: 2px solid #98b5dd; }
.macro { flex: 1; align-self: stretch; display: flex; align-items: center; padding: 0 0 2px 15px; border-right: 2px solid #e4effc; }
.macro svg { width: 26px; height: 24px; }
.macro::after { content: ""; width: 2px; height: 32px; margin-left: 15px; background: #98b5dd; box-shadow: 2px 0 #e4effc; }
.views { display: flex; align-items: center; padding: 0 0 2px 10px; }
.views, .zoom-value, .round, .zoom, .grip { align-self: stretch; background: linear-gradient(#b3cef5, #8fb0e3 45%, #7fa3da 50%, #9dbdec); }
.views button { width: 32px; height: 31px; border: 1px solid #cfdff5; }
.views button:not(.on) { background: #b9cdeb; }
.views svg { width: 22px; height: 19px; }
.zoom-value { width: 82px; padding: 1px 0 0 14px; line-height: 30px; color: #26498d; }
.round { width: 28px; padding-bottom: 2px; }
.round svg { width: 26px; height: 26px; }
.zoom { appearance: none; width: 174px; height: auto; margin: 0; padding-bottom: 2px; }
.zoom::-webkit-slider-runnable-track { height: 2px; background: #dfeafb; box-shadow: 0 1px #6f8fc5; }
.zoom::-webkit-slider-thumb { appearance: none; width: 15px; height: 22px; margin-top: -11px; background: linear-gradient(90deg, #5875ad 2px, #e6eefb 2px 7px, #7f97c3 7px 8px, #e6eefb 8px 13px, #5875ad 13px); clip-path: polygon(0 0, 100% 0, 100% 65%, 50% 100%, 0 65%); }
.grip { width: 24px; }

.taskbar { display: flex; align-items: stretch; height: 47px; background: #29292c; overflow: hidden; }
.icon-btn { width: 65px; flex: none; }
.icon-btn:first-child { width: 60px; }
.icon-btn:nth-child(2) { width: 72px; }
.icon-btn:nth-child(3) { width: 56px; margin-right: 5px; }
.task { width: 275px; justify-content: flex-start; gap: 8px; padding-left: 13px; background: #555356; font-size: 21px; line-height: 30px; color: #f0f0f0; white-space: nowrap; }
.task span { padding-top: 2px; }
.tray { flex: 1; display: flex; justify-content: flex-end; gap: 15px; background: linear-gradient(90deg, #353331, #29292c 50%); margin-right: -11px; }
.tray svg { width: 22px; height: 22px; }

.watermark { position: absolute; top: 8px; right: 36px; display: flex; gap: 19px; opacity: .82; z-index: 4; color: #f2f7fa; font-size: 39px; font-weight: 600; line-height: 54px; }
.watermark span { padding-top: 13px; }
.watermark svg { width: 142px; height: 64px; }
.caption { position: absolute; left: 0; right: 98px; bottom: 87px; z-index: 5; text-align: center; font-family: "Noto Sans CJK SC", sans-serif; font-size: 59px; font-weight: 500; line-height: 65px; white-space: nowrap; }
.caption p { position: relative; width: max-content; margin: 0 auto; }
.caption p::before { content: attr(data-text); position: absolute; left: 0; top: 0; color: #000; -webkit-text-stroke: 6px #000; paint-order: stroke fill; filter: drop-shadow(3px 0 #fff) drop-shadow(-3px 0 #fff) drop-shadow(0 3px #fff) drop-shadow(0 -3px #fff); }
.caption span { position: relative; color: transparent; background: repeating-linear-gradient(105deg, #fba5ab 0, #fbc09a 50px, #f0ef92 90px, #e9f790 120px, #f5fae0 135px, #7ef0d4 160px, #9adcf8 200px, #9ab0fa 240px, #c6b0ea 265px, #fba5ab 290px); -webkit-background-clip: text; background-clip: text; }
.caption .second span { background-image: repeating-linear-gradient(105deg, #f0ef92 0, #e9f790 40px, #f5fae0 75px, #7ef0d4 110px, #9adcf8 155px, #9ab0fa 185px, #c6b0ea 210px, #fba5ab 240px, #fbc09a 265px, #f0ef92 290px); }

.tv { position: fixed; right: 39px; bottom: 113px; width: 54px; height: 52px; }
.credit { position: fixed; right: 4px; bottom: 12px; font-family: "Liberation Sans", sans-serif; font-size: 35px; line-height: 40px; color: #aaa; }
```
